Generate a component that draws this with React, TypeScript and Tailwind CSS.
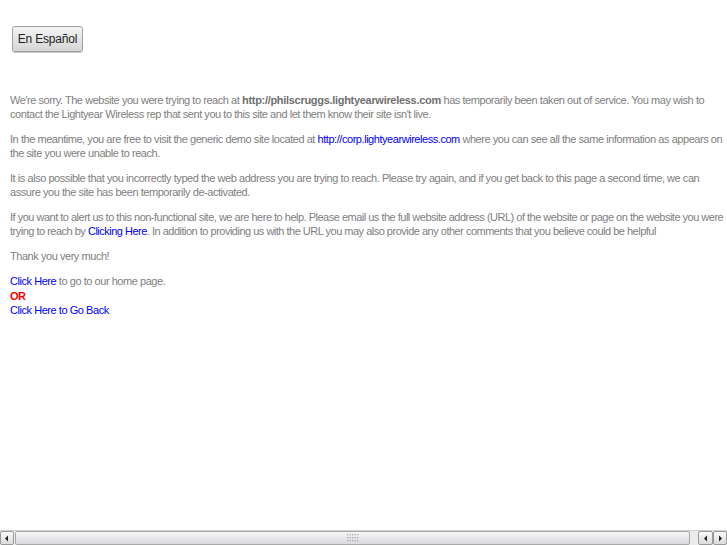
import React from "react";

export default function App() {
  const link = "text-[#0000ff]";
  return (
    <div className="h-[545px] w-[727px] overflow-hidden flex flex-col bg-white font-['Liberation_Sans',Arial,sans-serif]">
      <div className="flex-1 min-h-0">
        <div className="pt-[26px] pl-[12px]">
          <button className="h-[26px] w-[71px] rounded-[3px] border border-[#a0a0a0] bg-gradient-to-b from-[#f4f4f4] to-[#d6d6d6] text-[12px] tracking-[-0.2px] text-[#222] leading-none shadow-[0_1px_0_#c8c8c8]">
            En Español
          </button>
        </div>
        <div className="pl-[10px] w-[731px] pt-[41px] text-[11px] tracking-[-0.45px] leading-[14px] text-[#808080]">
          <p className="mb-[11px]">
            We're sorry. The website you were trying to reach at <b className="text-[#707070] tracking-[-0.3px]">http://philscruggs.lightyearwireless.com</b> has temporarily been taken out of service. You may wish to contact the Lightyear Wireless rep that sent you to this site and let them know their site isn't live.
          </p>
          <p className="mb-[11px]">
            In the meantime, you are free to visit the generic demo site located at <a className={link}>http://corp.lightyearwireless.com</a> where you can see all the same information as appears on the site you were unable to reach.
          </p>
          <p className="mb-[11px]">
            It is also possible that you incorrectly typed the web address you are trying to reach. Please try again, and if you get back to this page a second time, we can assure you the site has been temporarily de-activated.
          </p>
          <p className="mb-[11px] tracking-[-0.5px]">
            If you want to alert us to this non-functional site, we are here to help. Please email us the full website address (URL) of the website or page on the website you were trying to reach by <a className={link}>Clicking Here</a>. In addition to providing us with the URL you may also provide any other comments that you believe could be helpful
          </p>
          <p className="mb-[11px]">Thank you very much!</p>
          <div className="leading-[14.5px]">
            <div><a className={link}>Click Here</a> to go to our home page.</div>
            <div className="font-bold text-[#ff0000]">OR</div>
            <div><a className={link}>Click Here to Go Back</a></div>
          </div>
        </div>
      </div>
      <div className="h-[15px] flex items-stretch bg-[#ececec] border-t border-[#d0d0d0]">
        <div className="w-[14px] flex items-center justify-center border border-[#9a9a9a] bg-gradient-to-b from-[#fafafa] to-[#dcdcdc] rounded-[2px]">
          <svg width="6" height="7" viewBox="0 0 6 7"><path d="M4 0.5 L1 3.5 L4 6.5 Z" fill="#222" /></svg>
        </div>
        <div className="ml-[1px] w-[675px] flex items-center justify-center border border-[#a8a8a8] rounded-[2px] bg-gradient-to-b from-[#f6f6f7] to-[#dadade]">
          <svg width="12" height="8" viewBox="0 0 12 8">
            {[0, 3, 6].map((y) =>
              [0, 2.5, 5, 7.5, 10].map((x) => <rect key={`${x}-${y}`} x={x} y={y} width="1.3" height="1.3" fill="#a8a8b0" />)
            )}
          </svg>
        </div>
        <div className="flex-1" />
        <div className="w-[15px] flex items-center justify-center border border-[#9a9a9a] bg-gradient-to-b from-[#fafafa] to-[#dcdcdc] rounded-[2px]">
          <svg width="6" height="7" viewBox="0 0 6 7"><path d="M4 0.5 L1 3.5 L4 6.5 Z" fill="#222" /></svg>
        </div>
        <div className="w-[14px] flex items-center justify-center border border-[#9a9a9a] bg-gradient-to-b from-[#fafafa] to-[#dcdcdc] rounded-[2px]">
          <svg width="6" height="7" viewBox="0 0 6 7"><path d="M2 0.5 L5 3.5 L2 6.5 Z" fill="#222" /></svg>
        </div>
      </div>
    </div>
  );
}
